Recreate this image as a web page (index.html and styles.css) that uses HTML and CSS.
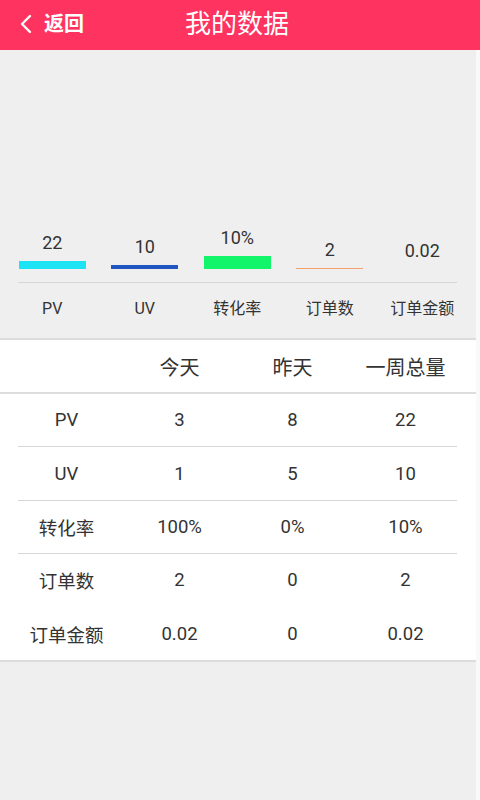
FILE: index.html
```html
<!DOCTYPE html>
<html lang="zh">
<head>
<meta charset="utf-8">
<title>我的数据</title>
<link rel="stylesheet" href="styles.css">
</head>
<body>
<header class="topbar">
  <div class="back">
    <svg class="chev" viewBox="0 0 14 20" width="14" height="20"><path d="M11 2 L3 10 L11 18" fill="none" stroke="#fff" stroke-width="2.4" stroke-linecap="round" stroke-linejoin="round"/></svg>
    <span class="back-text">返回</span>
  </div>
  <h1 class="title">我的数据</h1>
</header>
<main class="page">
  <section class="chart-panel">
    <div class="chart">
      <div class="col"><span class="val">22</span><span class="bar bar-pv" style="height:8px"></span></div>
      <div class="col"><span class="val">10</span><span class="bar bar-uv" style="height:4px"></span></div>
      <div class="col"><span class="val">10%</span><span class="bar bar-cr" style="height:13px"></span></div>
      <div class="col"><span class="val">2</span><span class="bar bar-od" style="height:1px"></span></div>
      <div class="col"><span class="val">0.02</span><span class="bar" style="height:0px"></span></div>
    </div>
    <div class="rule"></div>
    <div class="labels">
      <span>PV</span><span>UV</span><span>转化率</span><span>订单数</span><span>订单金额</span>
    </div>
  </section>
  <section class="table">
    <div class="thead">
      <span></span><span>今天</span><span>昨天</span><span>一周总量</span>
    </div>
    <div class="row"><span>PV</span><span>3</span><span>8</span><span>22</span></div>
    <div class="divider"></div>
    <div class="row"><span>UV</span><span>1</span><span>5</span><span>10</span></div>
    <div class="divider"></div>
    <div class="row"><span>转化率</span><span>100%</span><span>0%</span><span>10%</span></div>
    <div class="divider"></div>
    <div class="row"><span>订单数</span><span>2</span><span>0</span><span>2</span></div>
    <div class="divider blank"></div>
    <div class="row"><span>订单金额</span><span>0.02</span><span>0</span><span>0.02</span></div>
  </section>
</main>
</body>
</html>
```
FILE: styles.css
```css
* { box-sizing: border-box; }
html, body { margin: 0; padding: 0; }
body {
  width: 480px;
  height: 800px;
  background: #f9f9f9;
  font-family: Roboto, "Noto Sans CJK SC", "Noto Sans", sans-serif;
  color: #333;
  overflow: hidden;
}
.topbar {
  height: 50px;
  background: #fe3360;
  display: flex;
  align-items: center;
  position: relative;
}
.back {
  display: flex;
  align-items: center;
  padding-left: 19px;
  gap: 11px;
  color: #fff;
}
.chev { display: block; margin-top: -2px; }
.back-text {
  font-size: 20px;
  font-weight: 700;
  line-height: 24px;
  margin-top: -2px;
}
.title {
  position: absolute;
  left: 0;
  right: 0;
  top: 0;
  margin: 0;
  text-align: center;
  font-size: 26px;
  font-weight: 400;
  line-height: 48px;
  color: #fff;
  pointer-events: none;
  padding-right: 6px;
}
.page {
  width: 476px;
  background: #efefef;
  height: 750px;
}
.chart-panel {
  background: #efefef;
  border-bottom: 2px solid #dcdcdc;
}
.chart {
  height: 219px;
  display: grid;
  grid-template-columns: repeat(5, 92.5px);
  padding-left: 6px;
  align-items: end;
}
.col {
  display: flex;
  flex-direction: column;
  align-items: center;
}
.val {
  font-size: 18px;
  line-height: 20px;
  color: #333;
}
.bar {
  display: block;
  width: 67px;
  margin-top: 8px;
}
.bar-pv { background: #1ee3f5; }
.bar-uv { background: #1f56c2; }
.bar-cr { background: #12f56a; }
.bar-od { background: #f3a26e; }
.rule {
  height: 1px;
  background: #d6d6d6;
  margin: 13px 19px 0 18px;
}
.labels {
  display: grid;
  grid-template-columns: repeat(5, 92.5px);
  padding-left: 6px;
  height: 55px;
  padding-top: 16px;
  font-size: 16px;
  line-height: 20px;
  text-align: center;
  color: #333;
}
.table {
  background: #fff;
  border-bottom: 2px solid #dcdcdc;
}
.thead, .row {
  display: grid;
  grid-template-columns: 113px 113px 113px 113px;
  padding-left: 10px;
  align-items: center;
  text-align: center;
  font-size: 18.5px;
  color: #333;
}
.thead {
  height: 54px;
  border-bottom: 2px solid #dcdcdc;
  font-size: 20px;
}
.row { height: 52.4px; }
.divider {
  height: 1px;
  background: #d6d6d6;
  margin: 0 19px 0 18px;
}
.divider.blank { background: transparent; }
```
